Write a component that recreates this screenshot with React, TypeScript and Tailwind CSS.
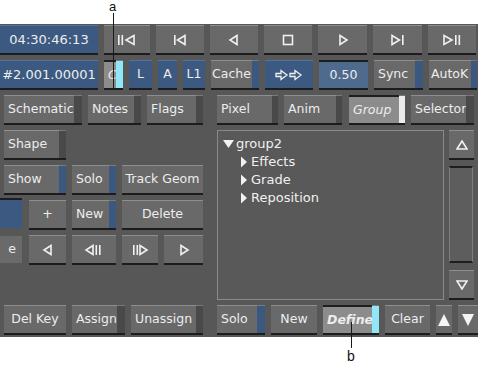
import React from "react";

type Tone = "gray" | "blue" | "sel" | "field";
type Tab = "blue" | "dark" | "cyan" | "white";

const faces: Record<Tone, string> = {
  gray: "bg-[#696969] border-t border-t-[#8e8e8e]",
  blue: "bg-[#3c5a81] border-t border-t-[#55739a]",
  sel: "bg-[#8c8c8c] border-t-2 border-t-[#1e1e1e]",
  field: "bg-[#4e6b8e] border-t-2 border-t-[#1e1e1e]",
};

const tabs: Record<Tab, string> = {
  blue: "bg-[#3a5880]",
  dark: "bg-[#494949]",
  cyan: "bg-[#8fe7f7]",
  white: "bg-[#ececec]",
};

function Btn({
  w,
  tone = "gray",
  tab,
  tabW = "w-[7px]",
  center,
  italic,
  pad = "pl-[4px]",
  children,
}: {
  w: string;
  tone?: Tone;
  tab?: Tab;
  tabW?: string;
  center?: boolean;
  italic?: string;
  pad?: string;
  children?: React.ReactNode;
}) {
  return (
    <div className={`flex h-[28px] shrink-0 shadow-[0_2px_0_#1c1c1c] ${w}`}>
      <div
        className={`flex flex-1 items-center overflow-hidden whitespace-nowrap text-[#ededed] ${faces[tone]} ${
          center ? "justify-center" : pad
        } ${italic ?? ""}`}
      >
        {children}
      </div>
      {tab && <div className={`${tabs[tab]} ${tabW} border-t border-t-[#7a7a7a]`} />}
    </div>
  );
}

const S = { stroke: "#f0f0f0", strokeWidth: 1.6, fill: "none" } as const;

function Icon({ kind }: { kind: string }) {
  return (
    <svg width="20" height="12" viewBox="0 0 20 12">
      {kind === "prevAll" && (
        <>
          <rect x="1" y="1" width="1.6" height="10" fill="#f0f0f0" />
          <rect x="4.5" y="1" width="1.6" height="10" fill="#f0f0f0" />
          <polygon points="17,1.5 9,6 17,10.5" {...S} />
        </>
      )}
      {kind === "prev" && (
        <>
          <rect x="4" y="1" width="1.6" height="10" fill="#f0f0f0" />
          <polygon points="15,1.5 7.5,6 15,10.5" {...S} />
        </>
      )}
      {kind === "back" && <polygon points="13,1.5 6,6 13,10.5" {...S} />}
      {kind === "stop" && <rect x="5.5" y="1.5" width="9" height="9" {...S} />}
      {kind === "play" && <polygon points="7,1.5 14,6 7,10.5" {...S} />}
      {kind === "next" && (
        <>
          <polygon points="4,1.5 11.5,6 4,10.5" {...S} />
          <rect x="14" y="1" width="1.6" height="10" fill="#f0f0f0" />
        </>
      )}
      {kind === "nextAll" && (
        <>
          <polygon points="2,1.5 10,6 2,10.5" {...S} />
          <rect x="13" y="1" width="1.6" height="10" fill="#f0f0f0" />
          <rect x="16.5" y="1" width="1.6" height="10" fill="#f0f0f0" />
        </>
      )}
      {kind === "stepBack" && (
        <>
          <polygon points="9,1.5 2,6 9,10.5" {...S} />
          <rect x="11.5" y="1" width="1.6" height="10" fill="#f0f0f0" />
          <rect x="15" y="1" width="1.6" height="10" fill="#f0f0f0" />
        </>
      )}
      {kind === "stepFwd" && (
        <>
          <rect x="3" y="1" width="1.6" height="10" fill="#f0f0f0" />
          <rect x="6.5" y="1" width="1.6" height="10" fill="#f0f0f0" />
          <polygon points="10,1.5 17,6 10,10.5" {...S} />
        </>
      )}
    </svg>
  );
}

function Arrows() {
  return (
    <svg width="28" height="12" viewBox="0 0 28 12">
      <polygon points="1,4.5 6,4.5 6,1.5 12,6 6,10.5 6,7.5 1,7.5" {...S} strokeWidth={1.3} />
      <polygon points="15,4.5 20,4.5 20,1.5 26,6 20,10.5 20,7.5 15,7.5" {...S} strokeWidth={1.3} />
    </svg>
  );
}

function TreeArrow({ open }: { open?: boolean }) {
  return open ? (
    <svg width="12" height="10" viewBox="0 0 12 10" className="mr-[1px]">
      <polygon points="0,1 11,1 5.5,9" fill="#f2f2f2" />
    </svg>
  ) : (
    <svg width="8" height="12" viewBox="0 0 8 12" className="mr-[3px]">
      <polygon points="1,0.5 7,6 1,11.5" fill="#f2f2f2" />
    </svg>
  );
}

export default function App() {
  return (
    <div className="relative w-[478px] h-[365px] bg-white font-['DejaVu_Sans',sans-serif] text-[12.5px] overflow-hidden">
      <div className="h-[24px]" />
      <div className="bg-[#575757] h-[313px] pt-[1px] flex flex-col gap-[7px]">
        {/* row 1 */}
        <div className="flex h-[28px]">
          <div className="w-[98px] h-[28px] bg-[#3c5a81] border-t border-t-[#55739a] shadow-[0_2px_0_#1c1c1c] flex items-center justify-center text-[#ededed] text-[13px]">
            04:30:46:13
          </div>
          <div className="flex gap-[6px] ml-[6px]">
            <Btn w="w-[46px]" center><Icon kind="prevAll" /></Btn>
            <Btn w="w-[48px]" center><Icon kind="prev" /></Btn>
            <Btn w="w-[48px]" center><Icon kind="back" /></Btn>
            <Btn w="w-[48px]" center><Icon kind="stop" /></Btn>
            <Btn w="w-[49px]" center><Icon kind="play" /></Btn>
            <Btn w="w-[49px]" center><Icon kind="next" /></Btn>
            <Btn w="w-[48px]" center><Icon kind="nextAll" /></Btn>
          </div>
        </div>
        {/* row 2 */}
        <div className="flex h-[28px]">
          <div className="w-[98px] h-[28px] bg-[#3c5a81] border-t border-t-[#55739a] shadow-[0_2px_0_#1c1c1c] flex items-center justify-center text-[#ededed] text-[13px]">
            #2.001.00001
          </div>
          <div className="flex ml-[6px] gap-[6px]">
            <Btn w="w-[19px]" tone="sel" tab="cyan" italic="italic">C</Btn>
            <Btn w="w-[23px]" tone="blue" center>L</Btn>
            <Btn w="w-[19px]" tone="blue" center>A</Btn>
            <Btn w="w-[22px]" tone="blue" center>L1</Btn>
            <Btn w="w-[48px]" tab="blue" tabW="w-[7px]" pad="pl-[1px]">Cache</Btn>
            <Btn w="w-[48px]" tone="blue" center><Arrows /></Btn>
            <Btn w="w-[49px]" tone="field" center>0.50</Btn>
            <Btn w="w-[49px]" tab="blue" tabW="w-[8px]">Sync</Btn>
            <Btn w="w-[48px]" tab="blue" tabW="w-[6px]" pad="pl-[2px]">AutoK</Btn>
          </div>
        </div>
        {/* lower area */}
        <div className="flex">
          {/* left column */}
          <div className="w-[218px] flex flex-col gap-[7px]">
            <div className="flex gap-[6px] pl-[4px]">
              <Btn w="w-[78px]" tab="dark" tabW="w-[8px]">Schematic</Btn>
              <Btn w="w-[53px]" tab="dark">Notes</Btn>
              <Btn w="w-[56px]" tab="dark">Flags</Btn>
            </div>
            <div className="flex pl-[4px]">
              <Btn w="w-[62px]" tab="dark">Shape</Btn>
            </div>
            <div className="flex gap-[6px] pl-[4px]">
              <Btn w="w-[62px]" tab="blue">Show</Btn>
              <Btn w="w-[44px]" tab="blue">Solo</Btn>
              <Btn w="w-[81px]" center>Track Geom</Btn>
            </div>
            <div className="flex gap-[6px]">
              <div className="w-[22px] h-[30px] -mt-[2px] mr-[1px] bg-[#3c5a81] border-t-2 border-t-[#1e1e1e]" />
              <Btn w="w-[37px]" center>+</Btn>
              <Btn w="w-[44px]" tab="blue">New</Btn>
              <Btn w="w-[81px]" center>Delete</Btn>
            </div>
            <div className="flex gap-[6px]">
              <div className="w-[22px] h-[27px] mt-[1px] mr-[1px] bg-[#6a6a6a] flex items-center justify-end pr-[6px] text-[#ededed] overflow-hidden">
                e
              </div>
              <Btn w="w-[37px]" center><Icon kind="back" /></Btn>
              <Btn w="w-[44px]" center><Icon kind="stepBack" /></Btn>
              <Btn w="w-[36px]" center><Icon kind="stepFwd" /></Btn>
              <Btn w="w-[39px]" center><Icon kind="play" /></Btn>
            </div>
            <div className="flex gap-[6px] pl-[4px] mt-[35px]">
              <Btn w="w-[62px]" center>Del Key</Btn>
              <Btn w="w-[53px]" tab="dark" tabW="w-[8px]">Assign</Btn>
              <Btn w="w-[72px]" tab="dark">Unassign</Btn>
            </div>
          </div>
          {/* right column */}
          <div className="flex-1 flex flex-col gap-[7px]">
            <div className="flex gap-[6px]">
              <Btn w="w-[61px]" tab="dark" tabW="w-[6px]">Pixel</Btn>
              <Btn w="w-[58px]" tab="dark" tabW="w-[6px]">Anim</Btn>
              <div className="ml-[1px]">
                <Btn w="w-[56px]" tone="sel" tab="white" tabW="w-[6px]" italic="italic">Group</Btn>
              </div>
              <Btn w="w-[63px]" tab="dark" tabW="w-[8px]">Selector</Btn>
            </div>
            <div className="flex h-[170px]">
              <div className="w-[227px] h-[170px] border border-[#8a8a8a] bg-[#595959] pt-[4px] pl-[5px] text-[13px] leading-[18px] text-[#f0f0f0]">
                <div className="flex items-center"><TreeArrow open />group2</div>
                <div className="flex items-center pl-[17px]"><TreeArrow />Effects</div>
                <div className="flex items-center pl-[17px]"><TreeArrow />Grade</div>
                <div className="flex items-center pl-[17px]"><TreeArrow />Reposition</div>
              </div>
              <div className="ml-[5px] w-[25px] flex flex-col">
                <Btn w="w-[25px]" center>
                  <svg width="12" height="10" viewBox="0 0 12 10">
                    <polygon points="6,1 11,9 1,9" {...S} />
                  </svg>
                </Btn>
                <div className="mt-[8px] h-[97px] w-[24px] border-t-2 border-t-[#1e1e1e] border-x border-x-[#7d7d7d] border-b-2 border-b-[#1e1e1e] bg-[#5d5d5d]" />
                <div className="mt-[7px]">
                  <Btn w="w-[25px]" center>
                    <svg width="12" height="10" viewBox="0 0 12 10">
                      <polygon points="1,1 11,1 6,9" {...S} />
                    </svg>
                  </Btn>
                </div>
              </div>
            </div>
            <div className="flex gap-[6px] -mt-[2px]">
              <Btn w="w-[48px]" tab="blue" tabW="w-[8px]">Solo</Btn>
              <Btn w="w-[46px]" center>New</Btn>
              <Btn w="w-[56px]" tone="sel" tab="cyan" italic="italic font-bold">Define</Btn>
              <Btn w="w-[45px]" center>Clear</Btn>
              <Btn w="w-[16px]" center>
                <svg width="14" height="14" viewBox="0 0 14 14">
                  <polygon points="7,1 13,13 1,13" fill="#f4f4f4" />
                </svg>
              </Btn>
              <Btn w="w-[20px]" center>
                <svg width="14" height="14" viewBox="0 0 14 14">
                  <polygon points="1,1 13,1 7,13" fill="#f4f4f4" />
                </svg>
              </Btn>
            </div>
          </div>
        </div>
      </div>

      {/* annotation callouts */}
      <div className="absolute left-[109px] top-0 leading-[14px] font-['Liberation_Sans',sans-serif] text-[13px] text-[#111]">a</div>
      <div className="absolute left-[113px] top-[13px] w-px h-[75px] bg-[#1a1a1a]" />
      <div className="absolute left-[351px] top-[322px] w-px h-[26px] bg-[#1a1a1a]" />
      <div className="absolute left-[347px] top-[346px] font-['Liberation_Sans',sans-serif] text-[14px] text-[#111]">b</div>
    </div>
  );
}
